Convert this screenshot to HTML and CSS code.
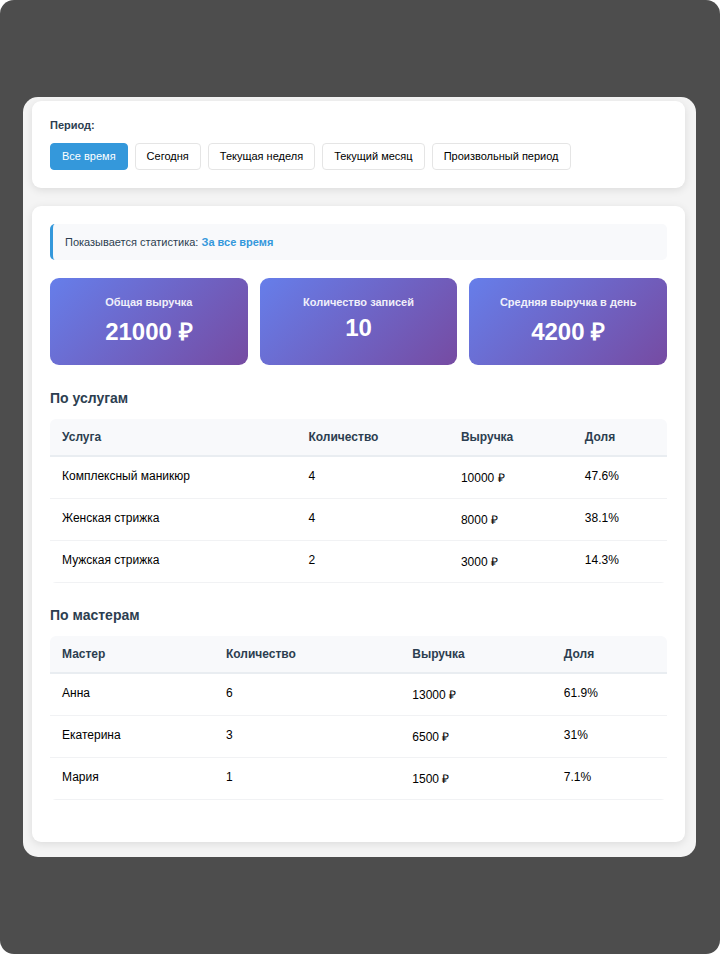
FILE: index.html
```html
<!DOCTYPE html>
<html lang="ru">
<head>
<meta charset="utf-8">
<meta name="viewport" content="width=device-width, initial-scale=1">
<title>Статистика</title>
<link rel="stylesheet" href="styles.css">
</head>
<body>
<div class="backdrop">
  <main class="window">
    <section class="panel" aria-labelledby="period-label">
      <h2 class="period-label" id="period-label">Период:</h2>
      <div class="periods">
        <button type="button" class="period period-active">Все время</button>
        <button type="button" class="period">Сегодня</button>
        <button type="button" class="period">Текущая неделя</button>
        <button type="button" class="period">Текущий месяц</button>
        <button type="button" class="period">Произвольный период</button>
      </div>
    </section>
    <section class="panel report">
      <p class="notice">Показывается статистика: <strong>За все время</strong></p>
      <div class="cards">
        <div class="card"><h3>Общая выручка</h3><p>21000 ₽</p></div>
        <div class="card"><h3>Количество записей</h3><p>10</p></div>
        <div class="card"><h3>Средняя выручка в день</h3><p>4200 ₽</p></div>
      </div>
      <h2 class="title" id="services">По услугам</h2>
      <table class="stats" aria-labelledby="services">
        <thead><tr><th>Услуга</th><th>Количество</th><th>Выручка</th><th>Доля</th></tr></thead>
        <tbody>
          <tr><td>Комплексный маникюр</td><td>4</td><td>10000 ₽</td><td>47.6%</td></tr>
          <tr><td>Женская стрижка</td><td>4</td><td>8000 ₽</td><td>38.1%</td></tr>
          <tr><td>Мужская стрижка</td><td>2</td><td>3000 ₽</td><td>14.3%</td></tr>
        </tbody>
      </table>
      <h2 class="title" id="masters">По мастерам</h2>
      <table class="stats" aria-labelledby="masters">
        <thead><tr><th>Мастер</th><th>Количество</th><th>Выручка</th><th>Доля</th></tr></thead>
        <tbody>
          <tr><td>Анна</td><td>6</td><td>13000 ₽</td><td>61.9%</td></tr>
          <tr><td>Екатерина</td><td>3</td><td>6500 ₽</td><td>31%</td></tr>
          <tr><td>Мария</td><td>1</td><td>1500 ₽</td><td>7.1%</td></tr>
        </tbody>
      </table>
    </section>
  </main>
</div>
</body>
</html>
```
FILE: styles.css
```css
* {
  box-sizing: border-box;
}

body {
  margin: 0;
  background: #fff;
  color: #000;
  font-family: "Liberation Sans", Arial, sans-serif;
  font-size: 12px;
}

h2, h3, p {
  margin: 0;
}

.backdrop {
  min-height: 100vh;
  padding: 97px 24px 97px 23px;
  border-radius: 14px;
  background: #4d4d4d;
}

.window {
  display: flex;
  flex-direction: column;
  gap: 18px;
  padding: 4px 11px 15px 9px;
  border-radius: 15px;
  background: #f4f4f4;
  overflow: hidden;
}

.panel {
  padding: 18px;
  border-radius: 9px;
  background: #fff;
  box-shadow: 0 2px 8px rgba(0, 0, 0, 0.1);
}

.report {
  padding-bottom: 19px;
}

.period-label {
  margin-bottom: 12px;
  color: #2c3e50;
  font-size: 11px;
  line-height: 12px;
}

.periods {
  display: flex;
  flex-wrap: wrap;
  gap: 7px;
}

.period {
  padding: 5px 11px;
  border: 1px solid #e5e5e5;
  border-radius: 4px;
  background: #fff;
  color: #000;
  font-family: inherit;
  font-size: 11px;
  line-height: 15px;
}

.period-active {
  border-color: #3498db;
  background: #3498db;
  color: #fff;
}

.notice {
  padding: 10px 12px;
  border-left: 3px solid #3498db;
  border-radius: 5px;
  background: #f8f9fb;
  color: #2c3e50;
  font-size: 11px;
  line-height: 16px;
}

.notice strong {
  color: #3498db;
}

.cards {
  display: grid;
  grid-template-columns: repeat(3, 1fr);
  gap: 12px;
  margin: 18px 0 24px;
}

.card {
  padding: 18px 12px;
  border-radius: 9px;
  background: linear-gradient(135deg, #667eea, #764ba2);
  color: #fff;
  text-align: center;
}

.card h3 {
  margin-bottom: 5px;
  font-size: 11px;
  line-height: 13px;
  opacity: 0.9;
}

.card p {
  font-size: 24px;
  font-weight: bold;
}

.title {
  margin-bottom: 12px;
  color: #2c3e50;
  font-size: 14px;
  line-height: 18px;
}

.stats {
  width: 100%;
  margin-bottom: 23px;
  border-spacing: 0;
  border-radius: 6px;
  overflow: hidden;
}

.stats th,
.stats td {
  text-align: left;
  vertical-align: top;
}

.stats th {
  height: 38px;
  padding: 11px 12px;
  border-bottom: 2px solid #e9edf1;
  background: #f8f9fb;
  color: #2c3e50;
}

.stats td {
  height: 42px;
  padding: 12px 12px 11px;
  border-bottom: 1px solid #f1f2f4;
}
```
